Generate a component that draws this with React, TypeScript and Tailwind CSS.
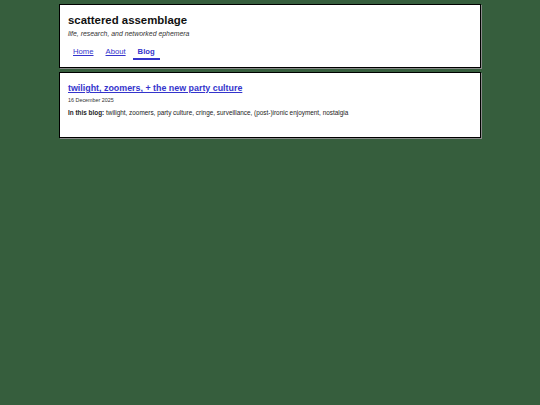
import React from "react";

export default function App() {
  return (
    <div className="min-h-[405px] w-full bg-[#365e3d] pt-1 font-['Liberation_Sans',Arial,sans-serif] text-black">
      <div className="mx-auto flex w-[422px] flex-col gap-1">
        <header className="border border-black bg-white px-2 pb-[7px] pt-[8px] shadow-[1px_1px_0_#8a8a8a]">
          <h1 className="text-[11.4px] font-bold leading-[14px] text-[#111]">scattered assemblage</h1>
          <p className="mt-[2px] text-[6.9px] italic leading-[9px] text-[#333]">life, research, and networked ephemera</p>
          <nav className="mt-[9px] flex gap-[2px] text-[7.7px] leading-[10px]">
            <a className="px-[5px] pb-[3px] text-[#3434cc] underline">Home</a>
            <a className="px-[5px] pb-[3px] text-[#3434cc] underline">About</a>
            <a className="border-b-2 border-[#3434cc] px-[5px] pb-[1px] font-bold text-[#3434cc]">Blog</a>
          </nav>
        </header>
        <main className="border border-black bg-white px-2 pb-[20px] pt-[9px] shadow-[1px_1px_0_#8a8a8a]">
          <a className="block text-[8.9px] font-bold leading-[12px] text-[#3434cc] underline">twilight, zoomers, + the new party culture</a>
          <p className="mt-[2.5px] text-[5.4px] leading-[7px] text-[#333]">16 December 2025</p>
          <p className="mt-[5px] text-[6.4px] leading-[8px] text-[#222]"><b>In this blog:</b> twilight, zoomers, party culture, cringe, surveillance, (post-)ironic enjoyment, nostalgia</p>
        </main>
      </div>
    </div>
  );
}
